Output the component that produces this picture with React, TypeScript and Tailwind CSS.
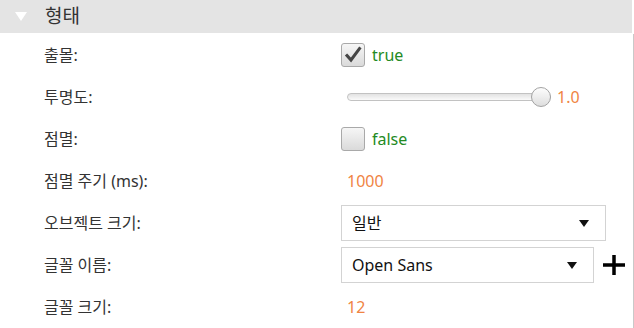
const FONT = {
  fontFamily: '"Noto Sans", "Noto Sans CJK KR", sans-serif',
};

function Checkbox({ checked }: { checked: boolean }) {
  return (
    <div className="w-6 h-6 rounded-[3px] border border-[#a9a9a9] bg-gradient-to-b from-[#f6f6f6] to-[#dadada] flex items-center justify-center">
      {checked && (
        <svg width="18" height="18" viewBox="0 0 18 18">
          <path d="M3 9.5 L7 14 L15.5 2.5" fill="none" stroke="#454545" strokeWidth="3" strokeLinecap="square" />
        </svg>
      )}
    </div>
  );
}

function Select({ value, width }: { value: string; width: string }) {
  return (
    <div className={`${width} h-9 border border-[#d3d3d3] bg-white flex items-center justify-between pl-[10px] pr-[16px]`}>
      <span className="text-[16px] text-[#111]">{value}</span>
      <svg width="10" height="7" viewBox="0 0 10 7">
        <path d="M0 0 H10 L5 7 Z" fill="#111" />
      </svg>
    </div>
  );
}

function Row({ label, children }: { label: string; children: React.ReactNode }) {
  return (
    <div className="h-[42px] flex items-center">
      <div className="w-[341px] pl-[44px] text-[16px] text-[#333]">{label}</div>
      <div className="flex-1 flex items-center">{children}</div>
    </div>
  );
}

export default function App() {
  return (
    <div className="w-[634px] h-[328px] bg-white flex overflow-hidden" style={FONT}>
      <div className="w-[632px] flex flex-col">
        <div className="h-[33px] bg-[#e4e4e4] flex items-center">
          <svg width="12" height="9" viewBox="0 0 12 9" className="ml-[15px]">
            <path d="M0 0 H12 L6 9 Z" fill="#fff" />
          </svg>
          <span className="ml-[18px] text-[19px] text-[#333]">형태</span>
        </div>
        <div className="h-px" />
        <Row label="출몰:">
          <div className="flex items-center gap-[7px]">
            <Checkbox checked />
            <span className="text-[16px] text-[#238a23]">true</span>
          </div>
        </Row>
        <Row label="투명도:">
          <div className="flex items-center pl-[6px]">
            <div className="relative w-[204px] h-5 flex items-center">
              <div className="w-full h-[8px] rounded-full border border-[#c2c2c2] bg-gradient-to-b from-[#e2e2e2] to-[#fafafa]" />
              <div className="absolute right-0 top-0 w-5 h-5 rounded-full border border-[#a3a3a3] bg-gradient-to-b from-[#fdfdfd] to-[#dedede]" />
            </div>
            <span className="ml-[6px] text-[16px] text-[#f08443]">1.0</span>
          </div>
        </Row>
        <Row label="점멸:">
          <div className="flex items-center gap-[7px]">
            <Checkbox checked={false} />
            <span className="text-[16px] text-[#238a23]">false</span>
          </div>
        </Row>
        <Row label="점멸 주기 (ms):">
          <span className="pl-[6px] text-[16px] text-[#f08443]">1000</span>
        </Row>
        <Row label="오브젝트 크기:">
          <Select value="일반" width="w-[265px]" />
        </Row>
        <Row label="글꼴 이름:">
          <Select value="Open Sans" width="w-[253px]" />
          <svg width="24" height="24" viewBox="0 0 24 24" className="ml-[8px]">
            <path d="M12 2 V22 M1 12 H23" stroke="#000" strokeWidth="3.5" />
          </svg>
        </Row>
        <Row label="글꼴 크기:">
          <span className="pl-[6px] text-[16px] text-[#f08443]">12</span>
        </Row>
      </div>
      <div className="w-[2px] flex flex-col">
        <div className="h-[34px]" />
        <div className="flex-1 w-px ml-px bg-[#c9c9c9]" />
      </div>
    </div>
  );
}
